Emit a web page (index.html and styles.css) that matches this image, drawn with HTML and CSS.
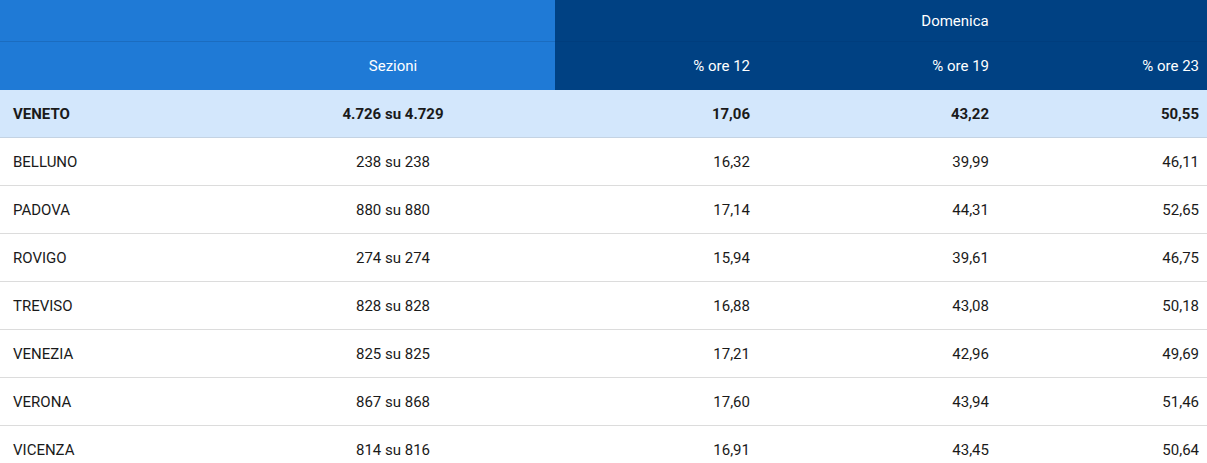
FILE: index.html
```html
<!DOCTYPE html>
<html lang="it">
<head>
<meta charset="utf-8">
<title>Affluenza Veneto</title>
<link rel="stylesheet" href="styles.css">
</head>
<body>
<table class="results">
  <colgroup>
    <col class="c-name"><col class="c-sez"><col class="c-12"><col class="c-19"><col class="c-23">
  </colgroup>
  <thead>
    <tr class="h1">
      <th class="light" colspan="2"></th>
      <th class="dark center day" colspan="3">Domenica</th>
    </tr>
    <tr class="h2">
      <th class="light"></th>
      <th class="light center">Sezioni</th>
      <th class="dark num">% ore 12</th>
      <th class="dark num">% ore 19</th>
      <th class="dark num">% ore 23</th>
    </tr>
  </thead>
  <tbody>
    <tr class="total">
      <td class="name">VENETO</td><td class="center">4.726 su 4.729</td><td class="num">17,06</td><td class="num">43,22</td><td class="num">50,55</td>
    </tr>
    <tr><td class="name">BELLUNO</td><td class="center">238 su 238</td><td class="num">16,32</td><td class="num">39,99</td><td class="num">46,11</td></tr>
    <tr><td class="name">PADOVA</td><td class="center">880 su 880</td><td class="num">17,14</td><td class="num">44,31</td><td class="num">52,65</td></tr>
    <tr><td class="name">ROVIGO</td><td class="center">274 su 274</td><td class="num">15,94</td><td class="num">39,61</td><td class="num">46,75</td></tr>
    <tr><td class="name">TREVISO</td><td class="center">828 su 828</td><td class="num">16,88</td><td class="num">43,08</td><td class="num">50,18</td></tr>
    <tr><td class="name">VENEZIA</td><td class="center">825 su 825</td><td class="num">17,21</td><td class="num">42,96</td><td class="num">49,69</td></tr>
    <tr><td class="name">VERONA</td><td class="center">867 su 868</td><td class="num">17,60</td><td class="num">43,94</td><td class="num">51,46</td></tr>
    <tr><td class="name">VICENZA</td><td class="center">814 su 816</td><td class="num">16,91</td><td class="num">43,45</td><td class="num">50,64</td></tr>
  </tbody>
</table>
</body>
</html>
```
FILE: styles.css
```css
html, body {
  margin: 0;
  padding: 0;
  background: #ffffff;
}
body {
  font-family: Roboto, "Noto Sans", sans-serif;
  font-size: 15px;
  color: #1a1a1a;
}
.results {
  border-collapse: collapse;
  table-layout: fixed;
  width: 1207px;
}
.c-name { width: 231px; }
.c-sez { width: 324px; }
.c-12 { width: 203px; }
.c-19 { width: 239px; }
.c-23 { width: 210px; }
th {
  font-weight: 400;
  color: #ffffff;
  padding: 0 8px;
}
.h1 th {
  height: 41px;
  border-bottom: 1px solid #1b6cbf;
}
.h1 th.dark { border-bottom-color: #003d7d; }
.h1 th.day { padding-left: 156px; }
.h2 th { height: 48px; }
.light { background: #1f7ad6; }
.dark { background: #004183; }
td {
  height: 47px;
  padding: 0 8px;
  border-bottom: 1px solid #dcdcdc;
}
.name { padding-left: 13px; }
.center { text-align: center; }
.num { text-align: right; }
.total td {
  background: #d3e7fc;
  font-weight: 700;
  border-bottom-color: #c4d3e3;
}
```
